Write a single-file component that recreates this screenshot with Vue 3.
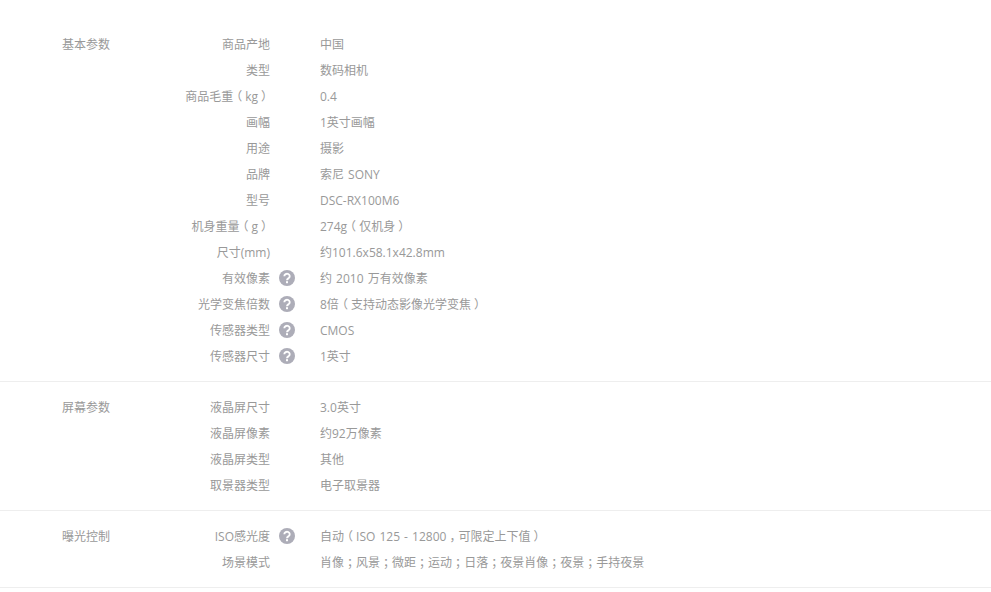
<script setup>
const groups = [
  { title: '基本参数', rows: [
    ['商品产地', '中国'],
    ['类型', '数码相机'],
    ['商品毛重（kg）', '0.4'],
    ['画幅', '1英寸画幅'],
    ['用途', '摄影'],
    ['品牌', '索尼 SONY'],
    ['型号', 'DSC-RX100M6'],
    ['机身重量（g）', '274g（仅机身）'],
    ['尺寸(mm)', '约101.6x58.1x42.8mm'],
    ['有效像素', '约 2010 万有效像素', true],
    ['光学变焦倍数', '8倍（支持动态影像光学变焦）', true],
    ['传感器类型', 'CMOS', true],
    ['传感器尺寸', '1英寸', true],
  ]},
  { title: '屏幕参数', rows: [
    ['液晶屏尺寸', '3.0英寸'],
    ['液晶屏像素', '约92万像素'],
    ['液晶屏类型', '其他'],
    ['取景器类型', '电子取景器'],
  ]},
  { title: '曝光控制', rows: [
    ['ISO感光度', '自动（ISO 125 - 12800，可限定上下值）', true],
    ['场景模式', '肖像；风景；微距；运动；日落；夜景肖像；夜景；手持夜景'],
  ]},
]

// Full-width punctuation is drawn centred in its cell in the reference.
const split = (text) => text.split(/([（），；])/).filter(Boolean).map((t) => ({ t, punct: /^[（），；]$/.test(t) }))
</script>

<template>
  <div class="page">
    <section v-for="g in groups" :key="g.title" class="group">
      <h3 class="title">{{ g.title }}</h3>
      <dl class="rows">
        <div v-for="r in g.rows" :key="r[0]" class="row">
          <dt class="label"><template v-for="(s, i) in split(r[0])" :key="i"><span v-if="s.punct" class="punct">{{ s.t }}</span><template v-else>{{ s.t }}</template></template></dt>
          <span class="help-slot">
            <svg v-if="r[2]" class="help" viewBox="0 0 16 16" width="16" height="16">
              <circle cx="8" cy="8" r="8" fill="#adadb8" />
              <path d="M5.3 6.2a2.7 2.5 0 1 1 4.2 2.1c-1 .7-1.5 1-1.5 2" fill="none" stroke="#fff" stroke-width="1.9" />
              <rect x="7" y="11.2" width="2" height="2" fill="#fff" />
            </svg>
          </span>
          <dd class="value"><template v-for="(s, i) in split(r[1])" :key="i"><span v-if="s.punct" class="punct">{{ s.t }}</span><template v-else>{{ s.t }}</template></template></dd>
        </div>
      </dl>
    </section>
  </div>
</template>

<style scoped>
.page {
  width: 991px;
  padding-top: 19px;
  font-family: "Open Sans", "Noto Sans CJK SC", sans-serif;
  font-size: 12px;
  line-height: 28px;
  word-spacing: 1px;
  color: #999;
}
.group {
  display: flex;
  padding: 12px 0 12px 62px;
  border-bottom: 1px solid #eee;
}
.title {
  width: 108px;
  height: 26px;
  margin: 0;
  font-size: 12px;
  font-weight: normal;
}
.rows {
  margin: 0;
}
.row {
  display: flex;
  height: 26px;
}
.label {
  width: 100px;
  text-align: right;
  white-space: nowrap;
}
.help-slot {
  display: flex;
  align-items: center;
  width: 50px;
  height: 26px;
  padding-left: 9px;
  box-sizing: border-box;
}
.value {
  margin: 0;
  white-space: nowrap;
}
.punct {
  padding: 0 3px;
  font-feature-settings: "halt";
}
</style>

<style>
html, body { background: #fff; }
</style>
